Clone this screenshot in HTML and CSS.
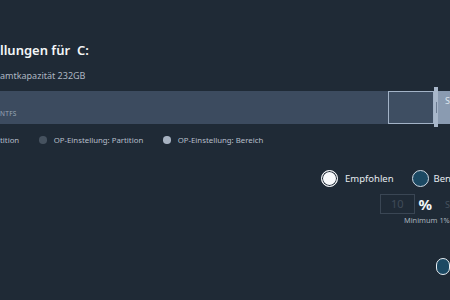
FILE: index.html
```html
<!DOCTYPE html>
<html><head><meta charset="utf-8"><link rel="stylesheet" href="styles.css"></head>
<body>
<div class="page">
  <h1 class="title">llungen für&nbsp; C:</h1>
  <p class="capacity">amtkapazität 232GB</p>
  <div class="bar">
    <div class="used"><span class="fs">NTFS</span></div>
    <div class="op"></div>
    <div class="handle"><span class="grip"></span></div>
    <div class="rest"><span class="rest-label">S</span></div>
  </div>
  <div class="legend">
    <span class="legend-item">tition</span>
    <span class="legend-item"><i class="dot dot-dark"></i>OP-Einstellung: Partition</span>
    <span class="legend-item"><i class="dot dot-light"></i>OP-Einstellung: Bereich</span>
  </div>
  <div class="options">
    <div class="radios">
      <label class="radio"><span class="radio-mark checked"></span>Empfohlen</label>
      <label class="radio radio-tight"><span class="radio-mark"></span>Ben</label>
    </div>
    <div class="amount">
      <span class="input">10</span><span class="pct">%</span><span class="hint">S</span>
    </div>
    <div class="minimum">Minimum 1%</div>
    <div class="actions"><span class="btn"></span></div>
  </div>
</div>
</body></html>
```

FILE: styles.css
```css
html, body {
  margin: 0;
  padding: 0;
  background: #1f2a36;
}
body {
  width: 450px;
  height: 300px;
  overflow: hidden;
  font-family: "Noto Sans", "Open Sans", sans-serif;
  color: #e8edf2;
}
.page {
  display: flex;
  flex-direction: column;
  width: 450px;
}
.title {
  margin: 41px 0 0 0;
  font-size: 13px;
  line-height: 18px;
  font-weight: 600;
  color: #f4f6f8;
  white-space: nowrap;
}
.capacity {
  margin: 11px 0 0 0;
  font-size: 9px;
  line-height: 12px;
  color: #aeb7c2;
  white-space: nowrap;
}
.bar {
  margin-top: 9px;
  height: 33px;
  display: flex;
  align-items: stretch;
}
.used {
  flex: 0 0 388px;
  background: #3c4b5f;
  display: flex;
  align-items: flex-end;
}
.fs {
  font-size: 6.5px;
  line-height: 8px;
  margin: 0 0 6px 0;
  color: #9aa7b6;
  letter-spacing: 0.3px;
}
.op {
  flex: 0 0 46px;
  box-sizing: border-box;
  border: 1.5px solid #a3b3c7;
  background: #3e4e62;
}
.handle {
  flex: 0 0 4px;
  margin: -4px 0 -3px 0;
  background: #a8b7ca;
  display: flex;
  align-items: center;
  justify-content: center;
}
.grip {
  width: 1px;
  height: 11px;
  background: #6c7c92;
}
.rest {
  flex: 1 0 12px;
  background: #8a9bb1;
  font-size: 9px;
  line-height: 12px;
  color: #dfe6ee;
  padding: 4px 0 0 7px;
}
.legend {
  margin-top: 11px;
  display: flex;
  align-items: center;
  gap: 20px;
  font-size: 7.8px;
  line-height: 10px;
  color: #b6bfca;
  white-space: nowrap;
}
.legend-item {
  display: flex;
  align-items: center;
}
.dot {
  width: 7.5px;
  height: 7.5px;
  border-radius: 50%;
  margin-right: 7px;
}
.dot-dark { background: #46525f; }
.dot-light { background: #a7b2c1; }
.options {
  margin-left: 321px;
  display: flex;
  flex-direction: column;
}
.radios {
  margin-top: 25px;
  display: flex;
  align-items: center;
  gap: 18px;
  white-space: nowrap;
  font-size: 9.5px;
  color: #e6ebf0;
}
.radio {
  display: flex;
  align-items: center;
  gap: 7px;
}
.radio-tight {
  gap: 5px;
}
.radio-mark {
  box-sizing: border-box;
  width: 17px;
  height: 17px;
  border-radius: 50%;
  border: 1.5px solid #cfd9e3;
  background: #1c4963;
}
.radio-mark.checked {
  background: #f7f9fb;
  border: 1.5px solid #f7f9fb;
  box-shadow: inset 0 0 0 1px #1f2a36;
}
.amount {
  margin: 7px 0 0 59px;
  display: flex;
  align-items: center;
  white-space: nowrap;
}
.input {
  box-sizing: border-box;
  width: 35px;
  height: 20px;
  border: 1px solid #3a4654;
  color: #3f4b59;
  font-size: 11px;
  line-height: 18px;
  text-align: center;
}
.pct {
  margin-left: 4px;
  font-size: 15px;
  font-weight: 700;
  color: #f2f5f8;
  line-height: 20px;
}
.hint {
  margin-left: 13px;
  font-size: 9px;
  color: #46525f;
}
.minimum {
  margin: 1px 0 0 83px;
  font-size: 7.4px;
  line-height: 10px;
  color: #a9b2bd;
  white-space: nowrap;
}
.actions {
  margin: 33px 0 0 115px;
  display: flex;
}
.btn {
  box-sizing: border-box;
  width: 60px;
  height: 17px;
  border-radius: 9px;
  border: 1.5px solid #e8eef3;
  background: #1c4963;
}
```
